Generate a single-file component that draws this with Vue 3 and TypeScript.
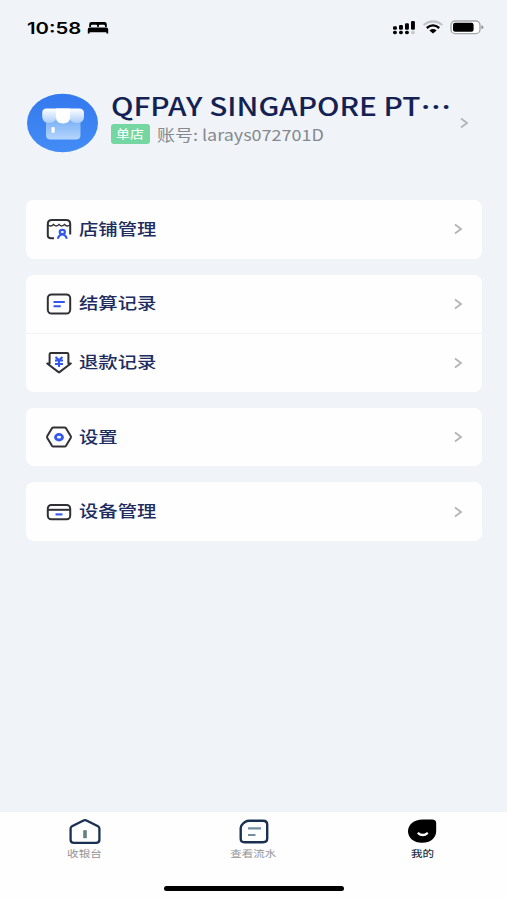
<script setup lang="ts">
type IconName = 'shop' | 'settle' | 'refund' | 'setting' | 'device'
interface MenuItem {
  label: string
  icon: IconName
}

const groups: MenuItem[][] = [
  [{ label: '店铺管理', icon: 'shop' }],
  [
    { label: '结算记录', icon: 'settle' },
    { label: '退款记录', icon: 'refund' },
  ],
  [{ label: '设置', icon: 'setting' }],
  [{ label: '设备管理', icon: 'device' }],
]

const dots = [
  { x: 1, y: 6.3, h: 3.4 },
  { x: 7, y: 5, h: 4.7 },
  { x: 13, y: 3.2, h: 6.5 },
  { x: 19, y: 1, h: 8.7 },
]
</script>

<template>
  <div class="screen">
    <header class="status">
      <span class="time"><b class="wide-time">10:58</b></span>
      <svg class="bed" width="22" height="14" viewBox="0 0 22 14">
        <path d="M2.2 6V3.2Q2.2 1 4.5 1H17.5Q19.8 1 19.8 3.2V6H18V5Q18 3.7 16.6 3.7H13Q11.8 3.7 11.8 5V6H10.2V5Q10.2 3.7 9 3.7H5.4Q4 3.7 4 5V6Z" />
        <path d="M.8 8.2Q.8 6.5 2.6 6.5H19.4Q21.2 6.5 21.2 8.2V12.6H19.4V11.2H2.6V12.6H.8Z" />
      </svg>
      <div class="indicators">
        <svg width="24" height="15" viewBox="0 0 24 15">
          <rect v-for="d in dots" :key="d.x" :x="d.x" :y="d.y" width="3.9" :height="d.h" rx="1.3" />
          <rect v-for="(d, i) in dots" :key="'b' + d.x" :x="d.x" y="10.7" width="3.9" height="3.5" rx="1.6" :fill="i === 3 ? '#c7cacd' : '#000'" />
        </svg>
        <svg class="wifi" width="22" height="15" viewBox="0 0 22 15" fill="none">
          <path d="M1.6 5Q11-2.4 20.4 5" stroke="#bfc3c7" stroke-width="2.2" />
          <path d="M4.8 8Q11 2.8 17.2 8" stroke="#000" stroke-width="2.3" />
          <path d="M7.4 10.5Q11 7.6 14.6 10.5L11 13.4Z" fill="#000" />
        </svg>
        <svg class="battery" width="34" height="15" viewBox="0 0 34 15">
          <rect x="1" y="1" width="29" height="12.6" rx="4.2" fill="#fff" stroke="#a5a8ab" stroke-width="1.4" />
          <rect x="3" y="2.8" width="20.6" height="9" rx="2.2" />
          <path d="M31.4 5.3Q33.4 6 33.4 7.3T31.4 9.3Z" fill="#8d9093" />
        </svg>
      </div>
    </header>

    <section class="profile">
      <svg class="avatar" width="72" height="60" viewBox="0 0 72 60">
        <defs>
          <linearGradient id="disc" x1="0" y1="0" x2="0" y2="1">
            <stop offset="0" stop-color="#3479ee" />
            <stop offset="1" stop-color="#438cf5" />
          </linearGradient>
          <linearGradient id="body" x1="0" y1="0" x2="0" y2="1">
            <stop offset="0" stop-color="#75adf6" />
            <stop offset="1" stop-color="#b5d5fc" />
          </linearGradient>
          <linearGradient id="awning" x1="0" y1="0" x2="0" y2="1">
            <stop offset="0" stop-color="#fff" />
            <stop offset="1" stop-color="#a9cdfb" />
          </linearGradient>
        </defs>
        <ellipse cx="36.500" cy="30" rx="35.500" ry="29.3" fill="url(#disc)" />
        <path d="M20 25H54.500V42Q54.500 46.500 50 46.500H24.500Q20 46.500 20 42Z" fill="url(#body)" />
        <path d="M20.500 15.500H53Q58 15.500 58 20V24Q57.500 30 51 30Q46 30 43.500 26H30Q28 30 23 30Q17 30 16.200 24V20Q16.200 15.500 20.500 15.500Z" fill="url(#awning)" />
        <path d="M30 15.500H44V24Q44 30.500 37 30.500T30 24Z" fill="#fff" />
        <rect x="25.500" y="34" width="3.200" height="6" rx="1.4" fill="#fff" />
      </svg>
      <div class="who">
        <div class="name"><span class="stretch name-text">QFPAY SINGAPORE PT<span class="more">···</span></span></div>
        <div class="account">
          <span class="badge"><span class="badge-text">单店</span></span>
          <span class="stretch account-text">账号: larays072701D</span>
        </div>
      </div>
      <svg class="chevron" width="10" height="12" viewBox="0 0 10 12"><path d="M2 1.500L8 6L2 10.500" /></svg>
    </section>

    <main class="groups">
      <div v-for="(group, gi) in groups" :key="gi" class="card">
        <div v-for="item in group" :key="item.label" class="row">
          <svg class="icon" width="28" height="24" viewBox="0 0 28 24">
            <g v-if="item.icon === 'shop'">
              <path d="M9 21.200H6Q2.800 21.200 2.800 18.500V7Q2.800 3 7 3H21Q25.200 3 25.200 7V17.500" />
              <path class="scallop" d="M2.800 7.500C4 9.600 7 9.200 8.500 7.400C10 9.400 12.500 9.400 14 7.400C15.500 9.400 18 9.400 19.500 7.400C21 9.200 24 9.600 25.200 7.500" />
              <g class="blue"><ellipse cx="17.300" cy="15" rx="2.600" ry="2.100" /><path d="M12.800 21.800Q14 17.500 17.300 17.500T21.800 21.800" /></g>
            </g>
            <g v-else-if="item.icon === 'settle'">
              <rect x="2.800" y="2.400" width="22.400" height="19.200" rx="3.800" />
              <path class="blue" d="M8.500 10H19.800M8.500 14.200H15.800" />
            </g>
            <g v-else-if="item.icon === 'refund'">
              <path d="M6 2H22Q23.400 2 23.400 3.300V12.500H25.800L14.800 20.900Q14 21.500 13.200 20.900L2.200 12.500H4.600V3.300Q4.600 2 6 2Z" />
              <path class="blue" d="M10.500 6L14 9.300L17.500 6M14 9.300V16M10 9.500H18M10 13H18" />
            </g>
            <g v-else-if="item.icon === 'setting'">
              <path d="M8.500 2.500H19.500Q20.500 2.500 21 3.200L25.700 11Q26.200 12 25.700 13L21 20.800Q20.500 21.500 19.500 21.500H8.500Q7.500 21.500 7 20.800L2.300 13Q1.800 12 2.300 11L7 3.200Q7.500 2.500 8.500 2.500Z" />
              <ellipse class="blue ring" cx="14" cy="12.200" rx="3.500" ry="2.800" />
            </g>
            <g v-else>
              <rect x="2.800" y="5" width="22.400" height="14.200" rx="3.500" />
              <path d="M3 9.800H25" />
              <path class="blue" d="M10.500 14.400H17.500" />
            </g>
          </svg>
          <span class="stretch row-text">{{ item.label }}</span>
          <svg class="chevron" width="10" height="12" viewBox="0 0 10 12"><path d="M2 1.500L8 6L2 10.500" /></svg>
        </div>
      </div>
    </main>

    <footer class="tabbar">
      <nav class="tabs">
        <div class="tab">
          <svg width="34" height="28" viewBox="0 0 34 28" fill="none">
            <path d="M15.500 2.600Q17 1.700 18.500 2.600L30 8.200Q31.400 9 31.400 10.500V21.700Q31.400 24.900 28 24.900H6Q2.600 24.900 2.600 21.700V10.500Q2.600 9 4 8.200Z" stroke="#1a3050" stroke-width="2.300" />
            <path d="M17 12.200V20.200" stroke="#65817f" stroke-width="3.600" />
          </svg>
          <span class="tab-text">收银台</span>
        </div>
        <div class="tab">
          <svg width="34" height="28" viewBox="0 0 34 28" fill="none">
            <path d="M12.500 2.700H26Q30.200 2.700 30.200 6.500V20.500Q30.200 24.200 26 24.200H7.500Q3.700 24.200 3.700 20.500V10Q3.700 7.500 6 5.600L8 4Q10 2.700 12.500 2.700Z" stroke="#1a3050" stroke-width="2.400" />
            <path d="M11 10.300H24M11 17H18.500" stroke="#748fa0" stroke-width="2.200" />
          </svg>
          <span class="tab-text">查看流水</span>
        </div>
        <div class="tab active">
          <svg width="34" height="28" viewBox="0 0 34 28" fill="none">
            <path d="M17 1.500H26Q30.200 1.500 30.200 5V13C30.200 20 24.500 24.800 16 24.800C7.500 24.800 2 19.500 2 13.200S7.500 1.500 17 1.500Z" fill="#000" />
            <path d="M11.800 14.800Q16.800 19.200 21.800 14.800" stroke="#fff" stroke-width="2.300" />
          </svg>
          <span class="tab-text">我的</span>
        </div>
      </nav>
      <div class="home"></div>
    </footer>
  </div>
</template>

<style>
body {
  background: #f0f4f8;
}
</style>

<style scoped>
.screen {
  box-sizing: border-box;
  width: 507px;
  height: 900px;
  overflow: hidden;
  display: flex;
  flex-direction: column;
  background: #f0f4f8;
  font-family: "Noto Sans CJK SC", sans-serif;
}
svg {
  display: block;
  flex: none;
}
.status {
  display: flex;
  align-items: center;
  height: 55px;
  padding: 0 23px 0 27px;
}
.time {
  width: 60px;
  font: 600 16px/20px Inter, sans-serif;
}
.wide-time {
  display: inline-block;
  font-weight: 600;
  transform: scaleX(1.27);
  transform-origin: left;
}
.indicators {
  display: flex;
  align-items: center;
  margin-left: auto;
}
.wifi {
  margin-left: 6px;
}
.battery {
  margin-left: 6px;
}
.stretch {
  display: inline-block;
  white-space: nowrap;
  transform: scaleX(1.2);
  transform-origin: left;
}
.profile {
  display: flex;
  align-items: center;
  height: 72px;
  margin-top: 32px;
  padding: 0 38px 0 26px;
}
.who {
  flex: 1;
  min-width: 0;
  padding: 0 0 10px 13px;
}
.name {
  height: 31px;
  line-height: 28px;
  font-size: 25px;
  font-weight: 500;
  color: #142253;
}
.name-text {
  transform: scaleX(1.192);
}
.more {
  margin-left: 1px;
  font-family: "Noto Sans", sans-serif;
  font-weight: 600;
  line-height: 1;
  letter-spacing: 1.700px;
}
.account {
  display: flex;
  align-items: center;
  height: 24px;
}
.badge {
  width: 39px;
  height: 20px;
  line-height: 20px;
  border-radius: 3px;
  background: #74d6a1;
  color: #fff;
  text-align: center;
  font-size: 12px;
}
.badge-text {
  display: inline-block;
  transform: scaleX(1.16);
}
.account-text {
  margin-left: 7px;
  font-size: 15.500px;
  color: #85898f;
  transform: scaleX(1.16);
}
.chevron {
  fill: none;
  stroke: #b3b4b6;
  stroke-width: 1.800;
}
.groups {
  display: flex;
  flex-direction: column;
  gap: 16px;
  margin-top: 41px;
  padding: 0 25.500px 0 26px;
}
.card {
  border-radius: 8px;
  background: #fefefe;
}
.row {
  box-sizing: border-box;
  display: flex;
  align-items: center;
  height: 58.600px;
  padding: 0 19px;
}
.row + .row {
  border-top: 1px solid #f0f2f4;
}
.icon {
  fill: none;
  stroke: #303136;
  stroke-width: 2;
  stroke-linejoin: round;
}
.scallop {
  stroke-width: 1.500;
}
.blue {
  stroke: #3157ed;
  stroke-width: 2.100;
}
.ring {
  stroke-width: 2.800;
}
.row-text {
  margin-left: 6px;
  padding-bottom: 3px;
  font-size: 16px;
  font-weight: 500;
  color: #202c5e;
  transform: scaleX(1.21);
}
.row .chevron {
  margin-left: auto;
}
.tabbar {
  display: flex;
  flex-direction: column;
  align-items: center;
  height: 88px;
  margin-top: auto;
  background: #fefefe;
}
.tabs {
  display: grid;
  grid-template-columns: repeat(3, 1fr);
  width: 100%;
  height: 74px;
  padding-top: 6px;
  box-sizing: border-box;
}
.tab {
  display: flex;
  flex-direction: column;
  align-items: center;
  color: #929498;
}
.tab-text {
  font-size: 9.600px;
  line-height: 14px;
  transform: scaleX(1.2);
}
.active {
  color: #283346;
}
.active .tab-text {
  font-weight: 500;
}
.home {
  width: 180px;
  height: 5px;
  border-radius: 3px;
  background: #000;
}
</style>
